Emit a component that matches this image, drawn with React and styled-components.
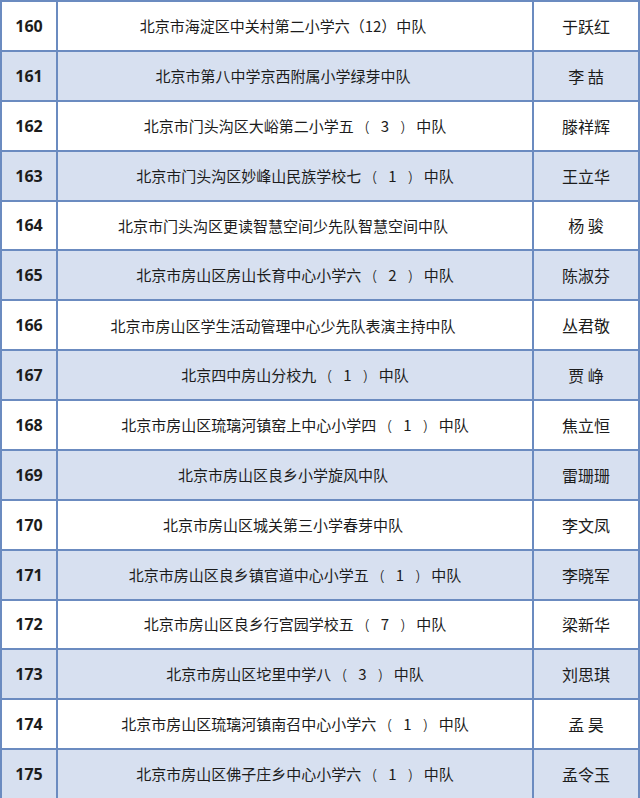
import styled, { createGlobalStyle } from "styled-components"

// wide: 原图里这些行的括号两边带空格，而且整行居中
const rows = [
    {no: "160", unit: "北京市海淀区中关村第二小学六（12）中队", name: "于跃红"},
    {no: "161", unit: "北京市第八中学京西附属小学绿芽中队", name: "李 喆"},
    {no: "162", unit: "北京市门头沟区大峪第二小学五（3）中队", name: "滕祥辉", wide: true},
    {no: "163", unit: "北京市门头沟区妙峰山民族学校七（1）中队", name: "王立华", wide: true},
    {no: "164", unit: "北京市门头沟区更读智慧空间少先队智慧空间中队", name: "杨 骏"},
    {no: "165", unit: "北京市房山区房山长育中心小学六（2）中队", name: "陈淑芬", wide: true},
    {no: "166", unit: "北京市房山区学生活动管理中心少先队表演主持中队", name: "丛君敬"},
    {no: "167", unit: "北京四中房山分校九（1）中队", name: "贾 峥", wide: true},
    {no: "168", unit: "北京市房山区琉璃河镇窑上中心小学四（1）中队", name: "焦立恒", wide: true},
    {no: "169", unit: "北京市房山区良乡小学旋风中队", name: "雷珊珊"},
    {no: "170", unit: "北京市房山区城关第三小学春芽中队", name: "李文凤"},
    {no: "171", unit: "北京市房山区良乡镇官道中心小学五（1）中队", name: "李晓军", wide: true},
    {no: "172", unit: "北京市房山区良乡行宫园学校五（7）中队", name: "梁新华", wide: true},
    {no: "173", unit: "北京市房山区坨里中学八（3）中队", name: "刘思琪", wide: true},
    {no: "174", unit: "北京市房山区琉璃河镇南召中心小学六（1）中队", name: "孟 昊", wide: true},
    {no: "175", unit: "北京市房山区佛子庄乡中心小学六（1）中队", name: "孟令玉", wide: true},
]

const renderUnit = (row) => {
    if (!row.wide) return row.unit
    return row.unit.split(/([（）])/).map((part, i) => {
        if (part === '（') return <Paren key={i}>(</Paren>
        if (part === '）') return <Paren key={i}>)</Paren>
        return part
    })
}

const GlobalStyle = createGlobalStyle`
    html, body {
        margin: 0;
        padding: 0;
        background: #ffffff;
    }
`

const App = () => {
    return (
        <>
            <GlobalStyle />
            <Table>
                <colgroup>
                    <col style={{width: '56px'}} />
                    <col style={{width: '476px'}} />
                    <col />
                </colgroup>
                <tbody>
                    {rows.map((row, i) => (
                        <Row key={row.no} shaded={i % 2 === 1 ? 1 : 0}>
                            <Num>{row.no}</Num>
                            <Unit wide={row.wide ? 1 : 0}>{renderUnit(row)}</Unit>
                            <Person>{row.name}</Person>
                        </Row>
                    ))}
                </tbody>
            </Table>
        </>
    )
}

const Table = styled.table`
    width: 640px;
    height: 798px;
    border-collapse: collapse;
    table-layout: fixed;
    font-family: "Noto Sans CJK SC", "Noto Sans", sans-serif;
    color: #1c1c1c;
`
const Row = styled.tr`
    height: 49.875px;
    background: ${({shaded})=> shaded ? '#d7e0f0' : '#ffffff'};
`
const Cell = styled.td`
    border: 2px solid #6b8bc0;
    text-align: center;
    vertical-align: middle;
    padding: 0;
    line-height: 1;
`
const Num = styled(Cell)`
    font-family: "Open Sans", "Noto Sans", sans-serif;
    font-weight: 700;
    font-size: 16px;
`
const Unit = styled(Cell)`
    font-size: 15px;
    padding-right: ${({wide})=> wide ? '0' : '24px'};
`
const Paren = styled.span`
    display: inline-block;
    width: 27px;
    text-align: center;
    font-family: "Noto Sans", sans-serif;
    font-weight: 300;
`
const Person = styled(Cell)`
    font-size: 16px;
`

export default App
